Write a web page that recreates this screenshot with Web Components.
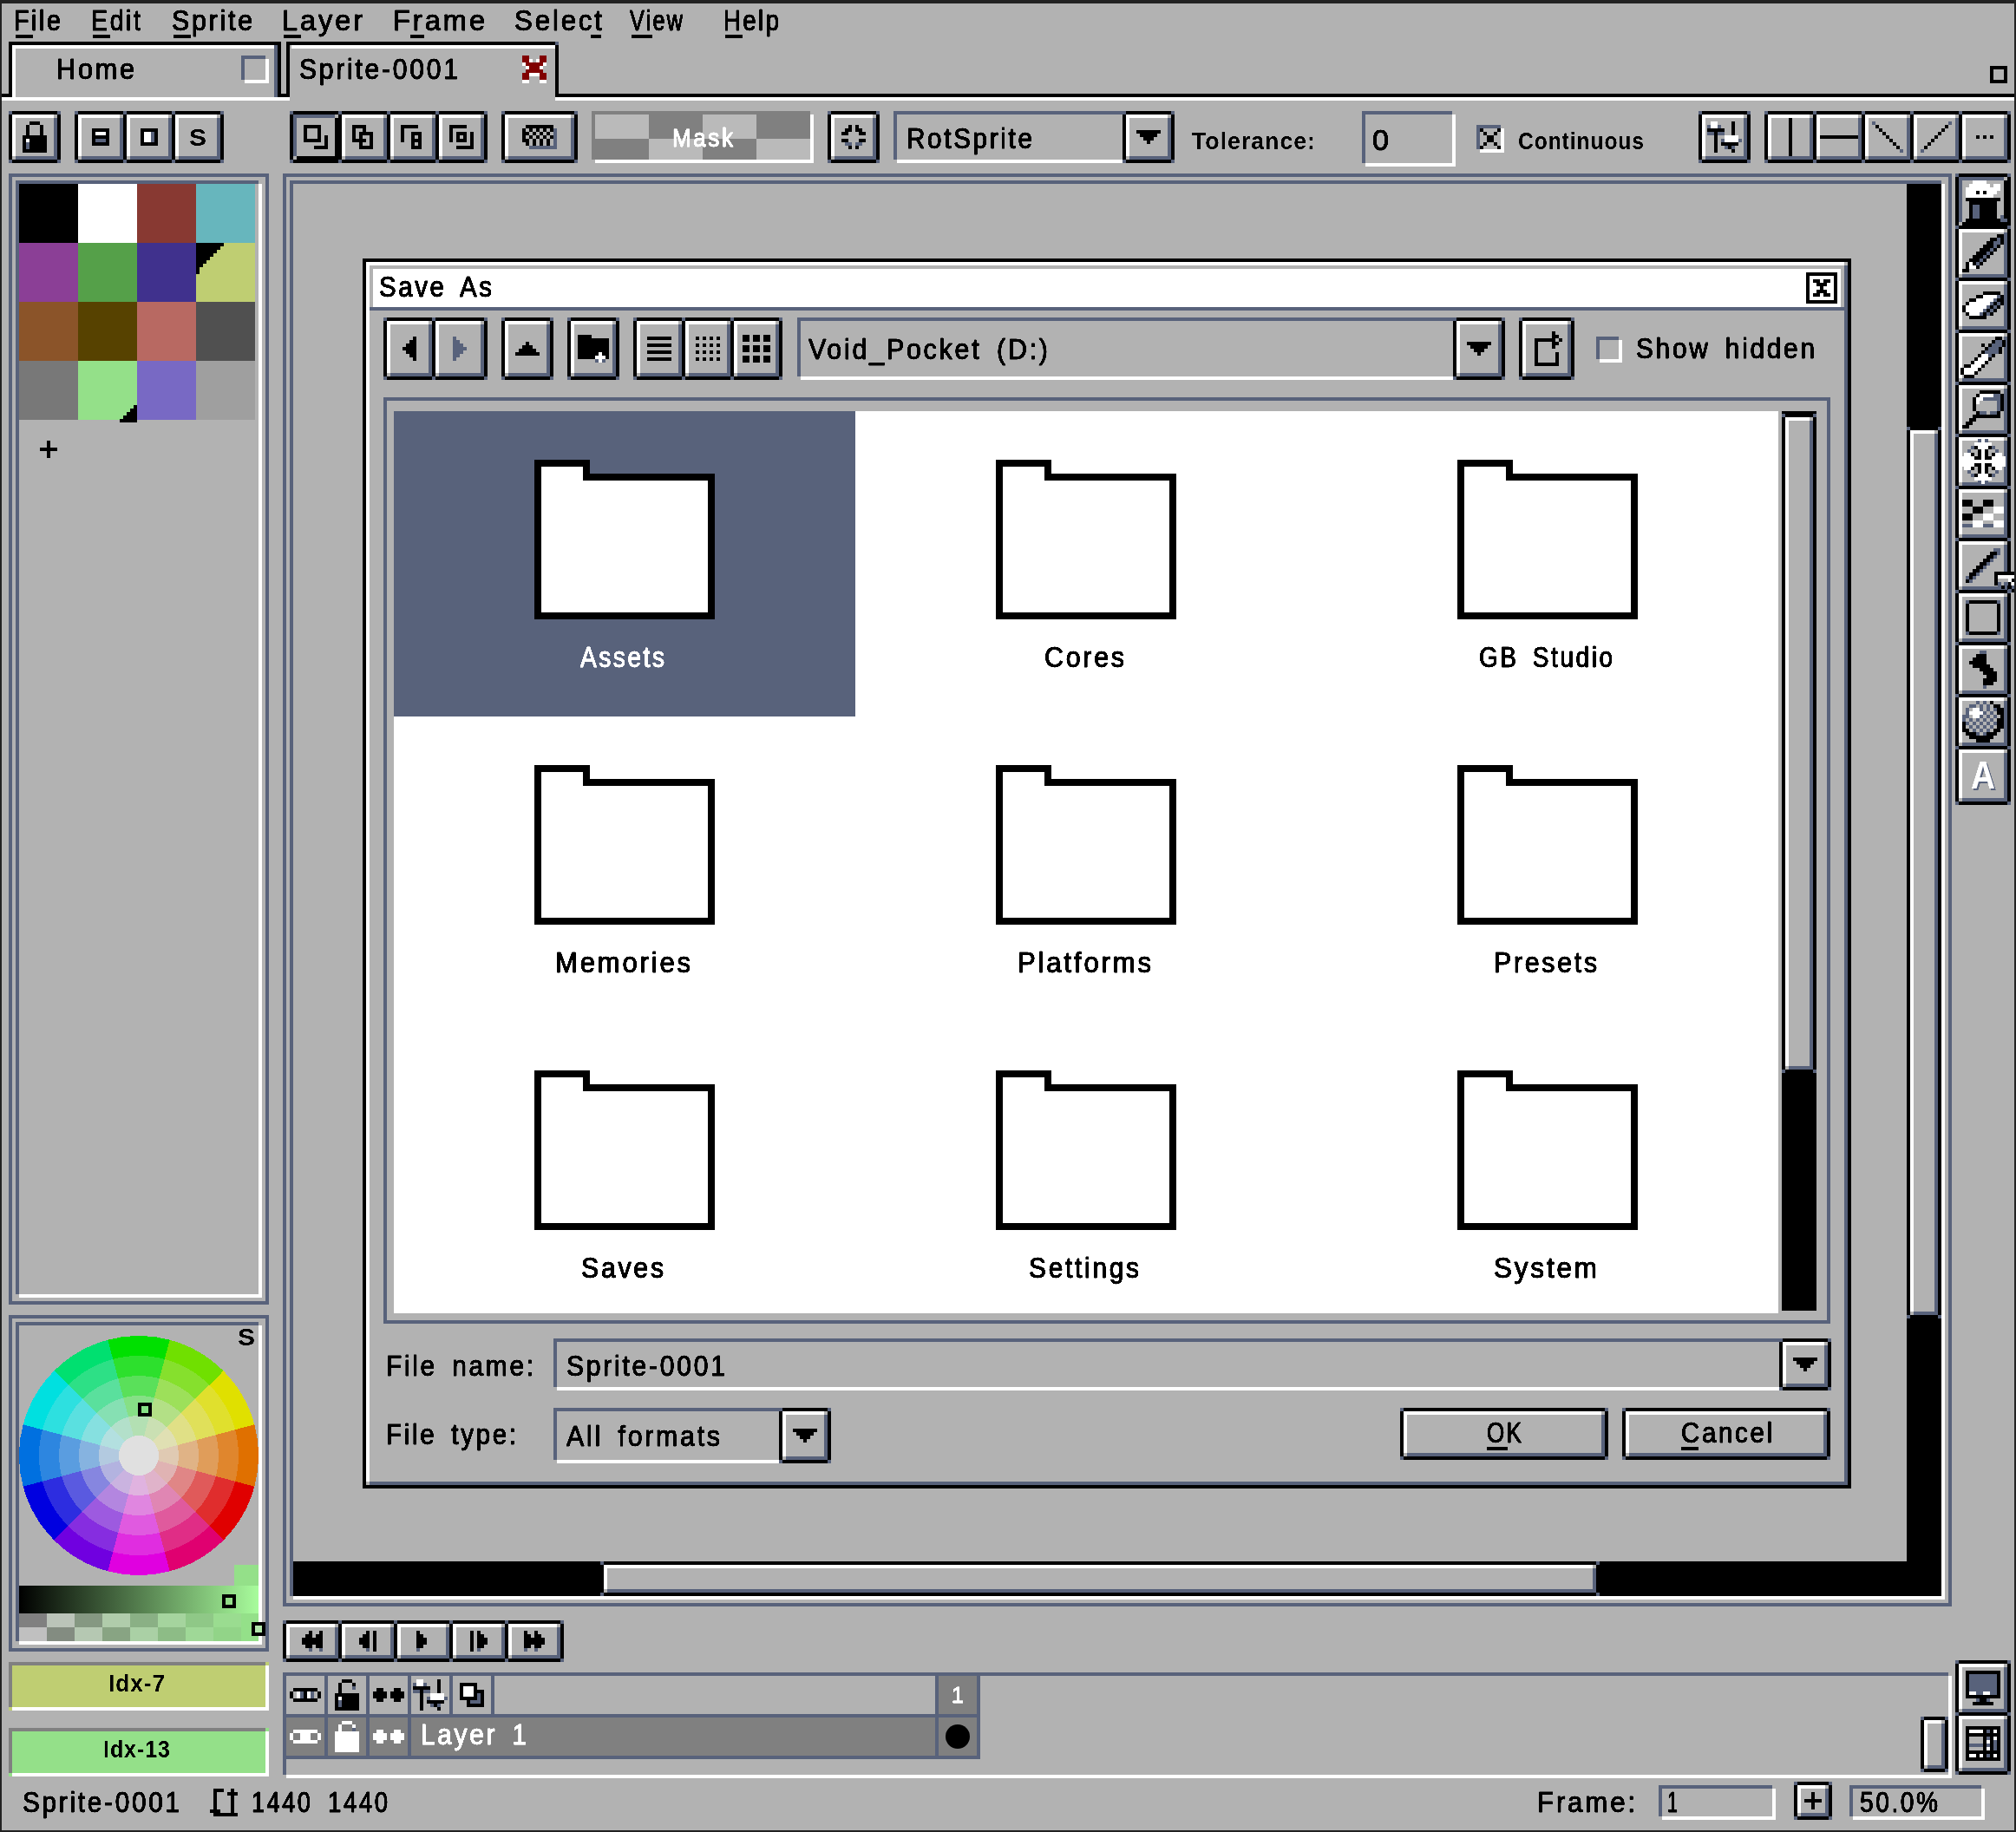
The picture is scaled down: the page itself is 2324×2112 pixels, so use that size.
<!DOCTYPE html>
<html>
<head>
<meta charset="utf-8">
<title>Aseprite - Save As</title>
<style>
  html, body { margin: 0; padding: 0; background: #222; }
</style>
</head>
<body>
<ase-app></ase-app>
<script>
const SLATE = '#58627b';
const FACE = '#b2b2b2';

// 4px-strip bevel: first colour on top/left, second on bottom/right, corners stay open
function bevel(a, b) {
  return `linear-gradient(${a},${a}) 0 0/calc(100% - 4px) 4px no-repeat,
          linear-gradient(${a},${a}) 0 0/4px calc(100% - 4px) no-repeat,
          linear-gradient(${b},${b}) 100% 100%/calc(100% - 4px) 4px no-repeat,
          linear-gradient(${b},${b}) 100% 100%/4px calc(100% - 4px) no-repeat`;
}

function corners(c) {
  const g = `linear-gradient(${c},${c})`;
  return `${g} 0 0/4px 4px no-repeat, ${g} 100% 0/4px 4px no-repeat, ${g} 0 100%/4px 4px no-repeat, ${g} 100% 100%/4px 4px no-repeat`;
}

const ICON_COLORS = { '#': '#000', w: '#fff', s: SLATE, g: '#808080', r: '#800000', l: FACE };

// every icon is a grid of 4px cells
const ICONS = {
  lock: ['..###..', '.#...#.', '.#...#.', '.#...#.', '#######', '#w#####', '#s#####', '#s#####', '#######'],
  lockOpen: ['..###..', '.#...#.', '.#...s.', '.#.....', '#######', '#w#####', '#s#####', '#s#####', '#######'],
  lockWhite: ['..www..', '.w...w.', '.w...s.', 'wwwwwww', 'wwwwwww', 'wwwwwww', 'wwwwwww', 'wwwwwww', 'wwwwwww'],
  brushB: ['#####', '#www#', '#####', '#sss#', '#####'],
  brushO: ['#####', '#wws#', '#wws#', '#wws#', '#####'],
  modeReplace: ['#####..', '#...#..', '#...#..', '#...#.#', '#####.#', '......#', '...####'],
  modeAdd: ['####...', '#..#...', '#.####.', '#.#..#.', '####.#.', '..#..#.', '..####.'],
  modeSub: ['#####..', '#......', '#..###.', '#..#.#.', '#..###.', '...#.#.', '...###.'],
  modeInt: ['#####..', '#......', '#.###.#', '#.#.#.#', '#.###.#', '......#', '..#####'],
  pattern: ['.########.', '#.#.#.#.#s', '##.#.#.#.s', '#.#.#.#.#s', '##.#.#.#.s', '.#.#.#.#.s', '..ssssssss'],
  center: ['..#.#..', '.##.##.', '##...##', '.......', '##...##', '.ss.ss.', '..#.#..'],
  down: ['#######', '.#####.', '..###..', '...#...'],
  up: ['...#...', '..###..', '.#####.', '#######'],
  left: ['...#', '..##', '.###', '####', '.###', '..##', '...#'],
  right: ['s...', 'ss..', 'sss.', 'ssss', 'sss.', 'ss..', 's...'],
  check: ['#....#', '.#..#.', '..##..', '..##..', '.#..#.', '#....#'],
  sliders: ['.ww....#..', 'swws...#..', '#####..#..', 'ss#ss..#..', '..#..wwww.', '..#.swwwws', '..#.#####.', '..#..s#s..', '..#....#..'],
  lineV: ['#', '#', '#', '#', '#', '#', '#', '#', '#', '#', '#'],
  lineH: ['###########'],
  lineD: ['s........', '.#.......', '..#......', '...#.....', '....#....', '.....#...', '......#..', '.......#.', '........s'],
  lineU: ['........s', '.......#.', '......#..', '.....#...', '....#....', '...#.....', '..#......', '.#.......', 's........'],
  dots: ['#.#.#'],
  hat: ['....wwww......', '...wwwwww.ww..', '..wwwwwwwwww..', '..www#w#www...', '..wwwwwwww....', '..##########..', '...########...', '...#ss#####...', '...#ss#####...', '...#ss#####...', '...#ss#####.s.', '..##########ss'],
  pencil: ['..........##', '........##s#', '.......##ss#', '......###s#.', '.....###s#..', '....###s#...', '...###s#....', '..###s#.....', '.#w#s#......', '.#ww#.......', '##..........'],
  eraser: ['......#####.', '....##wwwws#', '..##wwwwws##', '.#wwwwwws#s#', '#wwwwwws#s#.', '#wwwwws#s#..', '.#wwws#s#...', '..#####.....'],
  dropper: ['..........##.', '.........#ss#', '......#.#sss#', '.......#sss#.', '......#ssss#.', '.....#wws#...', '....#www#....', '...#www#.....', '.##www#......', '#wwww#.......', '#www#........', '.###.........'],
  zoom: ['.....######.', '....#wwwwss#', '...#wwsssss#', '...#w.....s#', '...#......s#', '...#......s#', '....#ss.ss#.', '...########.', '..##........', '.##.........', '##..........'],
  move: ['.....sws.....', '....wwwww....', '...s#www#s...', '..s..#w#..s..', '.ww#.#w#.#ww.', 'wwww##w##wwww', 'wwwwwwwwwwwww', 'wwww##w##wwww', '.ww#.#w#.#ww.', '..s..#w#..s..', '...s#www#s...', '....wwwww....', '.....sws.....'],
  bucket: ['###...###...', '###...###...', '...###...www', '...###...www', '###...www...', '###...www...', '...www...www', 'ssswwwssswww'],
  line: ['........ss', '.......##s', '......##s.', '.....##s..', '....##s...', '...##s....', '..##s.....', '.##s......', 's#s.......', '#s........'],
  rect: ['s########s', '#........#', '#........#', '#........#', '#........#', '#........#', '#........#', '#........#', '#........#', 's########s'],
  curve: ['...ss...', '..###...', '.####...', '#####...', '.#####..', '...####.', '....####', '.....###', '....####', '....###.', '....s...'],
  blur: ['....s.s.#...', '..ss.s.s.##.', '.s.wws.s.s##', '.swwwws.s.##', 'ss.wws.s.s.#', 's.s.s.s.s.##', '#s.s.s.s.s##', '#.s.s.s.s.##', '##.s.s.s.##.', '.###s.s###..', '..#######...', '....####....'],
  eye: ['.#######.', '#.ws#ws.#', '#.ws#ws.#', '.#######.'],
  eyeWhite: ['.wwwwwww.', 'w..www..w', 'w..www..w', '.wwwwwww.'],
  cel: ['.##...##.', '####.####', '####.####', '.##...##.'],
  celWhite: ['.ww...ww.', 'wwww.wwww', 'wwww.wwww', '.ww...ww.'],
  blend: ['#####..', '#www#..', '#www###', '#www#s#', '#####s#', '..#sss#', '..#####'],
  monitor: ['##########', '#ssssssss#', '#ssssssss#', '#ssssssss#', '#ssssssss#', '#ssssssss#', '#wwsswwss#', '##########', '...s##s...', '..######..'],
  table: ['##########', '#wwww#s#w#', '##########', '#llll#s#w#', '#llll#w#s#', '#ssss#s#s#', '#llll#w#s#', '##########', '#ww#w#s#w#', '##########'],
  first: ['..#..#', '.##.##', '######', '######', '.##.##', '..s..s'],
  prev: ['..#.#', '.##.#', '###.#', '###.#', '.##.#', '..s.#'],
  play: ['#...', '##..', '###.', '###.', '##..', 's...'],
  next: ['#.#..', '#.##.', '#.###', '#.###', '#.##.', '#.s..'],
  last: ['#..#..', '##.##.', '######', '######', '##.##.', 's..s..'],
  newFolder: ['####.....', '#########', '#########', '#########', '#########', '######w##', '#####www#', '.....sws.'],
  list: ['#######', '.......', '#######', '.......', '#######', '.......', '#######'],
  gridSmall: ['#.#.#.#', '.......', '#.#.#.#', '.......', '#.#.#.#', '.......', '#.#.#.#'],
  gridBig: ['##.##.##', '##.##.##', '........', '##.##.##', '##.##.##', '........', '##.##.##', '##.##.##'],
  refresh: ['......#..', '......##.', '.######.#', '.#....##.', '.#....#..', '.#.......', '.#.....#.', '.#.....#.', '.#.....#.', '.#######.'],
  closeBox: ['#########', '#.......#', '#.##.##.#', '#..###..#', '#...#...#', '#..###..#', '#.##.##.#', '#.......#', '#########'],
  closeTab: ['rr...rr', 'rrw.wrr', 'wrrrrrw', '.wrrrw.', '.rrrrr.', 'rrwwwrr', 'rr...rr', 'ww...ww'],
  size: ['.###..#.', '.#...###', '.#....#.', '.#....#.', '.#....#.', '.#....#.', '###...#.', '.#######'],
  plus: ['..#..', '..#..', '#####', '..#..', '..#..'],
  cornerTL: ['########.', '#######..', '######...', '#####....', '####.....', '###......', '##.......', '#........', '#........'],
  cornerBR: ['....#', '...##', '..###', '.####', '#####'],
  flyout: ['######', '#wwwww', '#lllw#', '#s.s.w', '.s#.#s', '....s#']
};

class AseIcon extends HTMLElement {
  constructor() {
    super();
    this.attachShadow({ mode: 'open' });
  }

  connectedCallback() {
    const rows = ICONS[this.getAttribute('name')] || [];
    const cols = rows.reduce((m, r) => Math.max(m, r.length), 0);
    let rects = '';
    rows.forEach((row, y) => {
      let x = 0;
      while (x < row.length) {
        let end = x;
        while (end < row.length && row[end] === row[x]) end++;
        if (row[x] !== '.') {
          rects += `<rect x="${x * 4}" y="${y * 4}" width="${(end - x) * 4}" height="4" fill="${ICON_COLORS[row[x]]}"/>`;
        }
        x = end;
      }
    });
    this.shadowRoot.innerHTML = `
      <style>:host { display: block; flex: none; } svg { display: block; }</style>
      <svg width="${cols * 4}" height="${rows.length * 4}" shape-rendering="crispEdges">${rects}</svg>`;
  }
}

// text squeezed to the width it has in the reference, with the edge blur pushed to hard pixels
class AseText extends HTMLElement {
  constructor() {
    super();
    this.attachShadow({ mode: 'open' });
    this.shadowRoot.innerHTML = `
      <style>
        :host { display: block; flex: none; position: relative; }
        span { display: inline-block; white-space: pre; transform-origin: 0 0; filter: url(#thick); font-family: "Liberation Sans", Arial, sans-serif; font-weight: normal; letter-spacing: 3px; word-spacing: 7px; -webkit-text-stroke: 0.6px currentColor; }
        :host([b]) span { filter: url(#crisp); font-weight: bold; letter-spacing: 1px; word-spacing: 0; -webkit-text-stroke: 0; }
        i { position: absolute; height: 4px; background: currentColor; }
        svg { position: absolute; width: 0; height: 0; }
      </style>
      <svg>
        <filter id="crisp" x="-20%" y="-30%" width="140%" height="160%"><feComponentTransfer><feFuncA type="linear" slope="2.6" intercept="-0.75"/></feComponentTransfer></filter>
        <filter id="thick" x="-20%" y="-30%" width="140%" height="160%"><feComponentTransfer><feFuncA type="linear" slope="3.4" intercept="-0.35"/></feComponentTransfer></filter>
      </svg>
      <span><slot></slot></span>`;
  }

  connectedCallback() {
    const size = parseFloat(this.getAttribute('s')) || 33;
    const lineHeight = Math.round(size * 0.97);
    const span = this.shadowRoot.querySelector('span');
    span.style.fontSize = size + 'px';
    span.style.lineHeight = lineHeight + 'px';
    this.style.height = lineHeight + 'px';
    const width = parseFloat(this.getAttribute('w'));
    if (width) {
      span.style.transform = 'none';
      const natural = span.getBoundingClientRect().width - (this.hasAttribute('b') ? 1 : 3);
      span.style.transform = `scaleX(${width / natural})`;
      this.style.width = width + 'px';
    }
    if (this.hasAttribute('u')) {
      const [x, w] = this.getAttribute('u').split(',');
      const bar = document.createElement('i');
      bar.style.left = x + 'px';
      bar.style.width = w + 'px';
      bar.style.top = '32px';
      this.shadowRoot.appendChild(bar);
    }
  }
}

class AseBtn extends HTMLElement {
  constructor() {
    super();
    this.attachShadow({ mode: 'open' });
    this.shadowRoot.innerHTML = `
      <style>
        :host { display: flex; flex: none; box-sizing: border-box; padding: 4px; background: ${corners(SLATE)}, #000; position: relative; }
        .face { flex: 1; display: flex; align-items: center; justify-content: center; position: relative; background: ${bevel('#fff', SLATE)}, ${FACE}; }
        :host([pressed]) .face { background: ${bevel(SLATE, '#000')}, ${FACE}; }
      </style>
      <div class="face"><slot></slot></div>`;
  }

  connectedCallback() {
    this.style.width = this.getAttribute('w') + 'px';
    this.style.height = this.getAttribute('h') + 'px';
  }
}

// a row or column of buttons that share their black edge
class AseBtnGroup extends HTMLElement {
  constructor() {
    super();
    this.attachShadow({ mode: 'open' });
    this.shadowRoot.innerHTML = `
      <style>
        :host { display: flex; flex: none; }
        :host([vertical]) { flex-direction: column; }
        ::slotted(*:not(:first-child)) { margin-left: -4px; }
        :host([vertical]) ::slotted(*:not(:first-child)) { margin-left: 0; margin-top: -4px; }
      </style>
      <slot></slot>`;
  }
}

class AseField extends HTMLElement {
  constructor() {
    super();
    this.attachShadow({ mode: 'open' });
    this.shadowRoot.innerHTML = `
      <style>
        :host { display: flex; flex: none; box-sizing: border-box; align-items: center; padding-top: 4px; background: ${bevel(SLATE, '#fff')}; }
      </style>
      <slot></slot>`;
  }

  connectedCallback() {
    this.style.width = this.getAttribute('w') + 'px';
    this.style.height = this.getAttribute('h') + 'px';
    this.style.paddingLeft = (this.getAttribute('p') || 15) + 'px';
  }
}

class AseMenubar extends HTMLElement {
  constructor() {
    super();
    this.attachShadow({ mode: 'open' });
    const items = [['File', 54, 14, 20], ['Edit', 57, 35, 20], ['Sprite', 93, 36, 20], ['Layer', 93, 34, 20],
      ['Frame', 106, 35, 16], ['Select', 101, 34, 12], ['View', 61, 32, 24], ['Help', 64, 47, 20]];
    this.shadowRoot.innerHTML = `
      <style>:host { display: flex; flex: none; height: 44px; box-sizing: border-box; padding-top: 4px; }</style>
      ${items.map(([t, w, m, u]) => {
        const x = t === 'Frame' ? 20 : t === 'Select' ? 88 : 2;
        return `<ase-text w="${w}" u="${x},${u}" style="margin-left:${m}px">${t}</ase-text>`;
      }).join('')}`;
  }
}

class AseTab extends HTMLElement {
  constructor() {
    super();
    this.attachShadow({ mode: 'open' });
    this.shadowRoot.innerHTML = `
      <style>
        :host { display: flex; flex: none; box-sizing: border-box; width: 314px; height: 64px; align-items: flex-start; padding: 16px 0 0 55px; position: relative;
          background:
            linear-gradient(#000,#000) 0 0/100% 4px no-repeat,
            linear-gradient(#fff,#fff) 4px 4px/calc(100% - 12px) 4px no-repeat,
            linear-gradient(#000,#000) 0 0/4px 100% no-repeat,
            linear-gradient(#fff,#fff) 4px 4px/4px 100% no-repeat,
            linear-gradient(#000,#000) 100% 0/4px 100% no-repeat,
            linear-gradient(${SLATE},${SLATE}) calc(100% - 4px) 4px/4px 100% no-repeat,
            ${FACE}; }
        :host([active]) { height: 68px; padding-left: 15px;
          background:
            linear-gradient(${SLATE},${SLATE}) 100% 0/4px 4px no-repeat,
            linear-gradient(#000,#000) 0 0/100% 4px no-repeat,
            linear-gradient(#fff,#fff) 6px 4px/calc(100% - 10px) 4px no-repeat,
            linear-gradient(#000,#000) 0 0/4px 64px no-repeat,
            linear-gradient(#000,#000) 100% 0/4px 64px no-repeat,
            linear-gradient(${FACE},${FACE}) 4px 4px/calc(100% - 8px) 100% no-repeat; }
        .right { margin-left: auto; margin-right: 14px; }
      </style>
      <slot></slot>
      <div class="right"><slot name="close"></slot></div>`;
  }
}

class AseTabbar extends HTMLElement {
  constructor() {
    super();
    this.attachShadow({ mode: 'open' });
    this.shadowRoot.innerHTML = `
      <style>
        :host { display: flex; flex: none; height: 68px; align-items: flex-start;
          background: linear-gradient(#000,#000) 0 60px/100% 4px no-repeat, linear-gradient(#fff,#fff) 0 64px/100% 4px no-repeat; }
        .home { margin-left: 8px; }
        .sprite { margin-left: 6px; }
        .box { margin: 28px 8px 0 auto; width: 20px; height: 20px; box-sizing: border-box; border: 4px solid #000; }
        .closed { width: 32px; height: 32px; background: ${bevel(SLATE, '#fff')}; }
      </style>
      <ase-tab class="home">
        <ase-text w="90">Home</ase-text>
        <div class="closed" slot="close"></div>
      </ase-tab>
      <ase-tab class="sprite" active>
        <ase-text w="183">Sprite-0001</ase-text>
        <ase-icon name="closeTab" slot="close"></ase-icon>
      </ase-tab>
      <div class="box"></div>`;
  }
}

class AseMask extends HTMLElement {
  constructor() {
    super();
    this.attachShadow({ mode: 'open' });
    const cells = ['l', 'd', 'l', 'd', 'd', 'l', 'd', 'l'].map((c, i) =>
      `<b class="${c}" style="grid-area:${i < 4 ? 1 : 2} / ${i % 4 + 1}"></b>`).join('');
    this.shadowRoot.innerHTML = `
      <style>
        :host { display: block; flex: none; box-sizing: border-box; width: 256px; height: 60px; padding: 4px; background: ${bevel('#808080', '#fff')}; }
        .grid { display: grid; height: 100%; grid-template-columns: repeat(4, 1fr); grid-template-rows: 28px 24px; color: #fff; }
        .l { background: #bababa; }
        .d { background: #808080; }
        ase-text { grid-area: 1 / 1 / 3 / 5; place-self: center; }
      </style>
      <div class="grid">${cells}<ase-text w="70" s="30">Mask</ase-text></div>`;
  }
}

class AseToolbar extends HTMLElement {
  constructor() {
    super();
    this.attachShadow({ mode: 'open' });
    const btn = (icon, w = 60) => `<ase-btn w="${w}" h="60"><ase-icon name="${icon}"></ase-icon></ase-btn>`;
    this.shadowRoot.innerHTML = `
      <style>
        :host { display: flex; flex: none; height: 60px; margin-top: 12px; align-items: flex-start; }
        .gap { margin-left: 16px; }
        .small { margin-top: 22px; }
        .check { width: 32px; height: 32px; box-sizing: border-box; margin: 16px 0 0 24px; padding: 4px 0 0 4px; background: ${bevel(SLATE, '#fff')}; }
      </style>
      <ase-btn w="60" h="60" style="margin-left:8px"><ase-icon name="lock"></ase-icon></ase-btn>
      <ase-btn-group class="gap">
        ${btn('brushB')}${btn('brushO')}
        <ase-btn w="60" h="60"><ase-text w="20" s="28" b>S</ase-text></ase-btn>
      </ase-btn-group>
      <ase-btn-group style="margin-left:76px">
        <ase-btn w="60" h="60" pressed><ase-icon name="modeReplace"></ase-icon></ase-btn>
        ${btn('modeAdd')}${btn('modeSub')}${btn('modeInt')}
      </ase-btn-group>
      <ase-btn class="gap" w="88" h="60"><ase-icon name="pattern"></ase-icon></ase-btn>
      <ase-mask class="gap"></ase-mask>
      <ase-btn class="gap" w="60" h="60"><ase-icon name="center"></ase-icon></ase-btn>
      <ase-btn-group class="gap">
        <ase-field w="268" h="60"><ase-text w="145">RotSprite</ase-text></ase-field>
        ${btn('down')}
      </ase-btn-group>
      <ase-text class="small" w="142" s="27" b style="margin-left:20px">Tolerance:</ase-text>
      <ase-field w="108" h="64" p="12" style="margin-left:54px"><ase-text w="19">0</ase-text></ase-field>
      <div class="check"><ase-icon name="check"></ase-icon></div>
      <ase-text class="small" w="145" s="27" b style="margin-left:16px">Continuous</ase-text>
      <ase-btn w="60" h="60" style="margin-left:63px"><ase-icon name="sliders"></ase-icon></ase-btn>
      <ase-btn-group class="gap">
        ${btn('lineV')}${btn('lineH')}${btn('lineD')}${btn('lineU')}${btn('dots')}
      </ase-btn-group>`;
  }
}

class AsePalette extends HTMLElement {
  constructor() {
    super();
    this.attachShadow({ mode: 'open' });
    const colors = ['#000000', '#ffffff', '#883932', '#67b6bd', '#8b3f96', '#55a049', '#40318d', '#bfce72',
      '#8b5429', '#574200', '#b86962', '#505050', '#787878', '#94e089', '#7869c4', '#9f9f9f'];
    this.shadowRoot.innerHTML = `
      <style>
        :host { display: block; flex: none; box-sizing: border-box; height: 1304px; border: 4px solid ${SLATE}; padding: 4px; }
        .well { height: 100%; box-sizing: border-box; padding: 4px; background: ${bevel(SLATE, '#fff')}; }
        .grid { display: grid; grid-template-columns: repeat(4, 68px); grid-auto-rows: 68px; }
        .grid div { position: relative; }
        ase-icon { position: absolute; }
        .plus { position: static; margin: 24px 0 0 24px; }
      </style>
      <div class="well">
        <div class="grid">
          ${colors.map((c, i) => {
            let mark = '';
            if (i === 7) mark = '<ase-icon name="cornerTL" style="left:0;top:0"></ase-icon>';
            if (i === 13) mark = '<ase-icon name="cornerBR" style="right:0;bottom:-3px"></ase-icon>';
            return `<div style="background:${c}">${mark}</div>`;
          }).join('')}
        </div>
        <ase-icon class="plus" name="plus"></ase-icon>
      </div>`;
  }
}

class AseWheel extends HTMLElement {
  constructor() {
    super();
    this.attachShadow({ mode: 'open' });
    const hues = ['0,224,0', '112,224,0', '224,224,0', '224,112,0', '224,0,0', '224,0,112',
      '224,0,224', '112,0,224', '0,0,224', '0,112,224', '0,224,224', '0,224,112'];
    const center = 224;
    const point = (r, deg) => {
      const a = (deg - 90) * Math.PI / 180;
      return `${(138 + r * Math.cos(a)).toFixed(2)} ${(138 + r * Math.sin(a)).toFixed(2)}`;
    };
    let paths = '';
    for (let ring = 0; ring < 5; ring++) {
      const r = 138 - ring * 23;
      hues.forEach((hue, i) => {
        const mix = hue.split(',').map(v => Math.round(+v + (center - +v) * ring * 0.2)).join(',');
        const a0 = i * 30 - 15;
        paths += `<path d="M138 138L${point(r, a0)}A${r} ${r} 0 0 1 ${point(r, a0 + 30)}Z" fill="rgb(${mix})"/>`;
      });
    }
    let checks = '';
    for (let row = 0; row < 2; row++) {
      for (let col = 0; col < 9; col++) {
        const base = (row + col) % 2 ? 192 : 128;
        const t = Math.min(1, col / 8);
        const rgb = [148, 224, 137].map(v => Math.round(base + (v - base) * t));
        checks += `<b style="background:rgb(${rgb.join(',')})"></b>`;
      }
    }
    this.shadowRoot.innerHTML = `
      <style>
        :host { display: block; flex: none; box-sizing: border-box; height: 388px; margin-top: 12px; border: 4px solid ${SLATE}; padding: 4px; }
        .well { height: 100%; box-sizing: border-box; padding: 4px; background: ${bevel(SLATE, '#fff')}; }
        .content { position: relative; width: 276px; height: 364px; }
        svg { display: block; padding-top: 12px; }
        .ramp { height: 32px; margin-top: 12px; background: linear-gradient(90deg, #000, #a8fc9c); }
        .checks { display: grid; grid-template-columns: repeat(9, 32px); grid-auto-rows: 16px; width: 276px; overflow: hidden; }
        .mark { position: absolute; width: 16px; height: 16px; box-sizing: border-box; border: 4px solid #000; }
        .chip { position: absolute; left: 248px; top: 276px; width: 28px; height: 24px; background: #94e089; }
        .s { position: absolute; left: 252px; top: 0; }
      </style>
      <div class="well">
        <div class="content">
          <svg width="276" height="276" shape-rendering="crispEdges">${paths}<circle cx="138" cy="138" r="23" fill="rgb(224,224,224)"/></svg>
          <div class="ramp"></div>
          <div class="checks">${checks}</div>
          <div class="chip"></div>
          <ase-text class="s" w="20" s="28" b>S</ase-text>
          <div class="mark" style="left:137px;top:89px"></div>
          <div class="mark" style="left:234px;top:310px"></div>
          <div class="mark" style="left:268px;top:342px;background:#b4e8ac"></div>
        </div>
      </div>`;
  }
}

class AseColorLabel extends HTMLElement {
  constructor() {
    super();
    this.attachShadow({ mode: 'open' });
    this.shadowRoot.innerHTML = `
      <style>
        :host { display: flex; flex: none; box-sizing: border-box; height: 56px; padding: 0 6px 6px 0; align-items: center; justify-content: center; background: ${bevel('#808080', '#fff')}; }
      </style>
      <slot></slot>`;
  }

  connectedCallback() {
    this.style.backgroundColor = this.getAttribute('color');
  }
}

class AseScrollThumb extends HTMLElement {
  constructor() {
    super();
    this.attachShadow({ mode: 'open' });
    this.shadowRoot.innerHTML = `
      <style>
        :host { display: block; flex: none; box-sizing: border-box; padding: 4px; background: ${corners(SLATE)}, #000; }
        div { height: 100%; background: ${bevel('#fff', SLATE)}, ${FACE}; }
      </style>
      <div></div>`;
  }
}

class AseFolder extends HTMLElement {
  constructor() {
    super();
    this.attachShadow({ mode: 'open' });
    this.shadowRoot.innerHTML = `
      <style>
        :host { display: flex; flex-direction: column; align-items: center; box-sizing: border-box; padding-top: 56px; }
        :host([selected]) { background: ${SLATE}; color: #fff; }
        svg { display: block; margin-bottom: 28px; }
        ::slotted(ase-text) { margin-right: 5px; }
      </style>
      <svg width="208" height="184" shape-rendering="crispEdges">
        <path d="M0 0H64V16H208V184H0Z" fill="#000"/>
        <path d="M8 8H56V24H200V176H8Z" fill="#fff"/>
      </svg>
      <slot></slot>`;
  }
}

class AseDialog extends HTMLElement {
  constructor() {
    super();
    this.attachShadow({ mode: 'open' });
    const btn = (icon, w = 60) => `<ase-btn w="${w}" h="72"><ase-icon name="${icon}"></ase-icon></ase-btn>`;
    const folders = [['Assets', 97], ['Cores', 92], ['GB Studio', 154], ['Memories', 156], ['Platforms', 154], ['Presets', 119],
      ['Saves', 95], ['Settings', 127], ['System', 119]];
    this.shadowRoot.innerHTML = `
      <style>
        :host { display: block; position: absolute; left: 88px; top: 94px; width: 1716px; height: 1418px; box-sizing: border-box; border: 4px solid #000; color: #000; background: ${FACE}; }
        .frame { height: 100%; box-sizing: border-box; padding: 4px; background: ${bevel('#fff', SLATE)}; }
        .title { display: flex; align-items: center; box-sizing: border-box; height: 52px; padding: 4px 4px 0; border-bottom: 4px solid ${SLATE}; background: linear-gradient(#fff,#fff) content-box; }
        .title .name { margin: -3px 0 0 7px; }
        .title ase-icon { margin-left: auto; margin-right: 4px; }
        .tools { display: flex; margin: 8px 0 0 16px; height: 72px; align-items: flex-start; }
        .gap { margin-left: 16px; }
        .hidden { margin: 22px 0 0 20px; width: 30px; height: 30px; box-sizing: border-box; background: ${bevel(SLATE, '#fff')}; }
        .list { display: flex; width: 1668px; height: 1068px; box-sizing: border-box; margin: 20px 0 0 16px; border: 4px solid ${SLATE}; padding: 12px 12px 8px 8px; }
        .files { display: grid; grid-template-columns: repeat(3, 532px); grid-auto-rows: 352px; width: 1596px; height: 1040px; overflow: hidden; background: #fff; flex: none; }
        .track { width: 40px; margin-left: 4px; height: 1037px; padding-top: 3px; box-sizing: border-box; background: #000; flex: none; }
        .row { display: flex; margin-left: 19px; align-items: flex-start; }
        .row .label { margin-top: 16px; flex: none; }
        .lift { margin-top: -3px; }
        .buttons { margin-left: auto; margin-right: 16px; display: flex; gap: 16px; }
      </style>
      <div class="frame">
        <div class="title">
          <ase-text class="name" w="130">Save As</ase-text>
          <ase-icon name="closeBox"></ase-icon>
        </div>
        <div class="tools">
          <ase-btn-group>${btn('left')}${btn('right', 64)}</ase-btn-group>
          <ase-btn class="gap" w="60" h="72"><ase-icon name="up"></ase-icon></ase-btn>
          <ase-btn class="gap" w="60" h="72"><ase-icon name="newFolder"></ase-icon></ase-btn>
          <ase-btn-group class="gap">${btn('list')}${btn('gridSmall')}${btn('gridBig')}</ase-btn-group>
          <ase-btn-group style="margin-left:17px">
            <ase-field w="760" h="72" p="13"><ase-text class="lift" w="276">Void_Pocket (D:)</ase-text></ase-field>
            ${btn('down')}
          </ase-btn-group>
          <ase-btn class="gap" w="64" h="72"><ase-icon name="refresh"></ase-icon></ase-btn>
          <div class="hidden" style="margin-left:25px"></div>
          <ase-text w="206" style="margin:20px 0 0 16px">Show hidden</ase-text>
        </div>
        <div class="list">
          <div class="files">
            ${folders.map(([t, w], i) => `<ase-folder${i === 0 ? ' selected' : ''}><ase-text w="${w}">${t}</ase-text></ase-folder>`).join('')}
          </div>
          <div class="track"><ase-scroll-thumb style="height:760px"></ase-scroll-thumb></div>
        </div>
        <div class="row" style="margin-top:17px">
          <ase-text class="label" w="170">File name:</ase-text>
          <ase-field w="1417" h="60" style="margin-left:23px"><ase-text w="183">Sprite-0001</ase-text></ase-field>
          <ase-btn w="60" h="60" style="margin-left:-4px"><ase-icon name="down"></ase-icon></ase-btn>
        </div>
        <div class="row" style="margin-top:20px">
          <ase-text class="label" w="150" style="margin-top:15px">File type:</ase-text>
          <ase-field w="264" h="64" style="margin-left:43px"><ase-text class="lift" w="177">All formats</ase-text></ase-field>
          <ase-btn w="60" h="64" style="margin-left:-4px"><ase-icon name="down"></ase-icon></ase-btn>
          <div class="buttons">
            <ase-btn w="240" h="60"><ase-text class="lift" w="40" u="0,24">OK</ase-text></ase-btn>
            <ase-btn w="240" h="60"><ase-text class="lift" w="105" u="0,20">Cancel</ase-text></ase-btn>
          </div>
        </div>
      </div>`;
  }
}

class AseEditor extends HTMLElement {
  constructor() {
    super();
    this.attachShadow({ mode: 'open' });
    this.shadowRoot.innerHTML = `
      <style>
        :host { display: block; flex: none; position: relative; box-sizing: border-box; height: 1652px; border: 4px solid ${SLATE}; padding: 4px; }
        .well { height: 100%; box-sizing: border-box; padding: 4px; background: ${bevel(SLATE, '#fff')}; }
        .view { display: grid; height: 100%; grid-template-columns: 1fr 40px; grid-template-rows: 1fr 40px; }
        .vtrack { background: #000; padding-top: 280px; }
        .htrack { grid-column: 1 / 3; background: #000; padding-left: 354px; }
      </style>
      <div class="well">
        <div class="view">
          <div></div>
          <div class="vtrack"><ase-scroll-thumb style="height:1028px"></ase-scroll-thumb></div>
          <div class="htrack"><ase-scroll-thumb style="width:1152px;height:40px"></ase-scroll-thumb></div>
        </div>
      </div>
      <ase-dialog></ase-dialog>`;
  }
}

class AseTimeline extends HTMLElement {
  constructor() {
    super();
    this.attachShadow({ mode: 'open' });
    this.shadowRoot.innerHTML = `
      <style>
        :host { display: flex; flex: none; box-sizing: border-box; height: 122px; margin-top: 12px; padding: 4px; align-items: flex-start; background: ${bevel(SLATE, '#fff')}; }
        .grid { display: grid; grid-template-columns: repeat(5, 44px) 508px 44px; grid-auto-rows: 44px; gap: 4px; padding: 0 4px 4px 0; background: ${SLATE}; flex: none; }
        .grid > div { display: flex; align-items: center; justify-content: center; background: ${FACE}; }
        .grid > .on { background: #808080; color: #fff; }
        .name { grid-column: 4 / 7; justify-content: flex-start !important; padding: 0 0 4px 11px; }
        .dot { width: 28px; height: 28px; border-radius: 50%; background: #000; }
        ase-scroll-thumb { width: 32px; height: 64px; margin: 47px 0 0 auto; }
      </style>
      <div class="grid">
        <div><ase-icon name="eye"></ase-icon></div>
        <div><ase-icon name="lockOpen"></ase-icon></div>
        <div><ase-icon name="cel"></ase-icon></div>
        <div><ase-icon name="sliders"></ase-icon></div>
        <div><ase-icon name="blend"></ase-icon></div>
        <div></div>
        <div class="on"><ase-text w="14" s="25">1</ase-text></div>
        <div class="on"><ase-icon name="eyeWhite"></ase-icon></div>
        <div class="on"><ase-icon name="lockWhite"></ase-icon></div>
        <div class="on"><ase-icon name="celWhite"></ase-icon></div>
        <div class="on name"><ase-text w="122">Layer 1</ase-text></div>
        <div class="on"><span class="dot"></span></div>
      </div>
      <ase-scroll-thumb></ase-scroll-thumb>`;
  }
}

class AseStatusbar extends HTMLElement {
  constructor() {
    super();
    this.attachShadow({ mode: 'open' });
    this.shadowRoot.innerHTML = `
      <style>
        :host { display: flex; flex: none; height: 60px; align-items: flex-start; }
        ase-text { margin-top: 12px; }
        ase-icon { margin-top: 12px; }
        ase-field { margin-top: 8px; padding-top: 0 !important; }
        ase-field ase-text { margin-top: 0; }
        ase-btn ase-icon { margin-top: 0; }
      </style>
      <ase-text w="181" style="margin-left:24px">Sprite-0001</ase-text>
      <ase-icon name="size" style="margin-left:35px"></ase-icon>
      <ase-text w="68" style="margin-left:16px">1440</ase-text>
      <ase-text w="69" style="margin-left:20px">1440</ase-text>
      <ase-text w="113" style="margin-left:auto">Frame:</ase-text>
      <ase-field w="135" h="40" p="10" style="margin-left:27px"><ase-text w="12">1</ase-text></ase-field>
      <ase-btn w="44" h="44" style="margin:4px 0 0 21px"><ase-icon name="plus"></ase-icon></ase-btn>
      <ase-field w="156" h="40" p="12" style="margin:8px 34px 0 20px"><ase-text w="90">50.0%</ase-text></ase-field>`;
  }
}

class AseApp extends HTMLElement {
  constructor() {
    super();
    this.attachShadow({ mode: 'open' });
    const tool = (icon) => `<ase-btn w="64" h="64"><ase-icon name="${icon}"></ase-icon></ase-btn>`;
    const anim = (icon) => `<ase-btn w="68" h="48"><ase-icon name="${icon}"></ase-icon></ase-btn>`;
    this.shadowRoot.innerHTML = `
      <style>
        :host { display: flex; flex-direction: column; box-sizing: border-box; width: 2324px; height: 2112px; border: 2px solid #222; border-top-width: 4px; background: ${FACE}; color: #000; overflow: hidden; }
        .main { display: flex; flex: none; height: 1850px; margin-top: 12px; padding-left: 8px; }
        .left { display: flex; flex-direction: column; flex: none; width: 300px; }
        .center { display: flex; flex-direction: column; flex: none; width: 1924px; margin-left: 16px; }
        .right { display: flex; flex-direction: column; flex: none; width: 64px; margin-left: 4px; padding-bottom: 4px; }
        .right .bottom { margin-top: auto; }
        .anim { margin-top: 16px; }
        .flyout { position: absolute; left: 41px; top: 35px; }
        .texttool { color: #fff; text-shadow: 2px 2px 0 ${SLATE}; margin-top: -2px; }
      </style>
      <ase-menubar></ase-menubar>
      <ase-tabbar></ase-tabbar>
      <ase-toolbar></ase-toolbar>
      <div class="main">
        <div class="left">
          <ase-palette></ase-palette>
          <ase-wheel></ase-wheel>
          <ase-color-label color="#bfce72" style="margin-top:12px"><ase-text w="65" s="27" b>Idx-7</ase-text></ase-color-label>
          <ase-color-label color="#94e089" style="margin-top:20px"><ase-text w="77" s="27" b>Idx-13</ase-text></ase-color-label>
        </div>
        <div class="center">
          <ase-editor></ase-editor>
          <ase-btn-group class="anim">${anim('first')}${anim('prev')}${anim('play')}${anim('next')}${anim('last')}</ase-btn-group>
          <ase-timeline></ase-timeline>
        </div>
        <div class="right">
          <ase-btn-group vertical>
            <ase-btn w="64" h="64" pressed><ase-icon name="hat"></ase-icon></ase-btn>
            ${tool('pencil')}${tool('eraser')}${tool('dropper')}${tool('zoom')}${tool('move')}${tool('bucket')}
            <ase-btn w="64" h="64"><ase-icon name="line"></ase-icon><ase-icon class="flyout" name="flyout"></ase-icon></ase-btn>
            ${tool('rect')}${tool('curve')}${tool('blur')}
            <ase-btn w="64" h="68"><ase-text class="texttool" w="28" s="44" b>A</ase-text></ase-btn>
          </ase-btn-group>
          <ase-btn-group vertical class="bottom">
            <ase-btn w="64" h="64"><ase-icon name="monitor"></ase-icon></ase-btn>
            <ase-btn w="64" h="72"><ase-icon name="table"></ase-icon></ase-btn>
          </ase-btn-group>
        </div>
      </div>
      <ase-statusbar></ase-statusbar>`;
  }
}

window.customElements.define('ase-icon', AseIcon);
window.customElements.define('ase-text', AseText);
window.customElements.define('ase-btn', AseBtn);
window.customElements.define('ase-btn-group', AseBtnGroup);
window.customElements.define('ase-field', AseField);
window.customElements.define('ase-menubar', AseMenubar);
window.customElements.define('ase-tab', AseTab);
window.customElements.define('ase-tabbar', AseTabbar);
window.customElements.define('ase-mask', AseMask);
window.customElements.define('ase-toolbar', AseToolbar);
window.customElements.define('ase-palette', AsePalette);
window.customElements.define('ase-wheel', AseWheel);
window.customElements.define('ase-color-label', AseColorLabel);
window.customElements.define('ase-scroll-thumb', AseScrollThumb);
window.customElements.define('ase-folder', AseFolder);
window.customElements.define('ase-dialog', AseDialog);
window.customElements.define('ase-editor', AseEditor);
window.customElements.define('ase-timeline', AseTimeline);
window.customElements.define('ase-statusbar', AseStatusbar);
window.customElements.define('ase-app', AseApp);
</script>
</body>
</html>
